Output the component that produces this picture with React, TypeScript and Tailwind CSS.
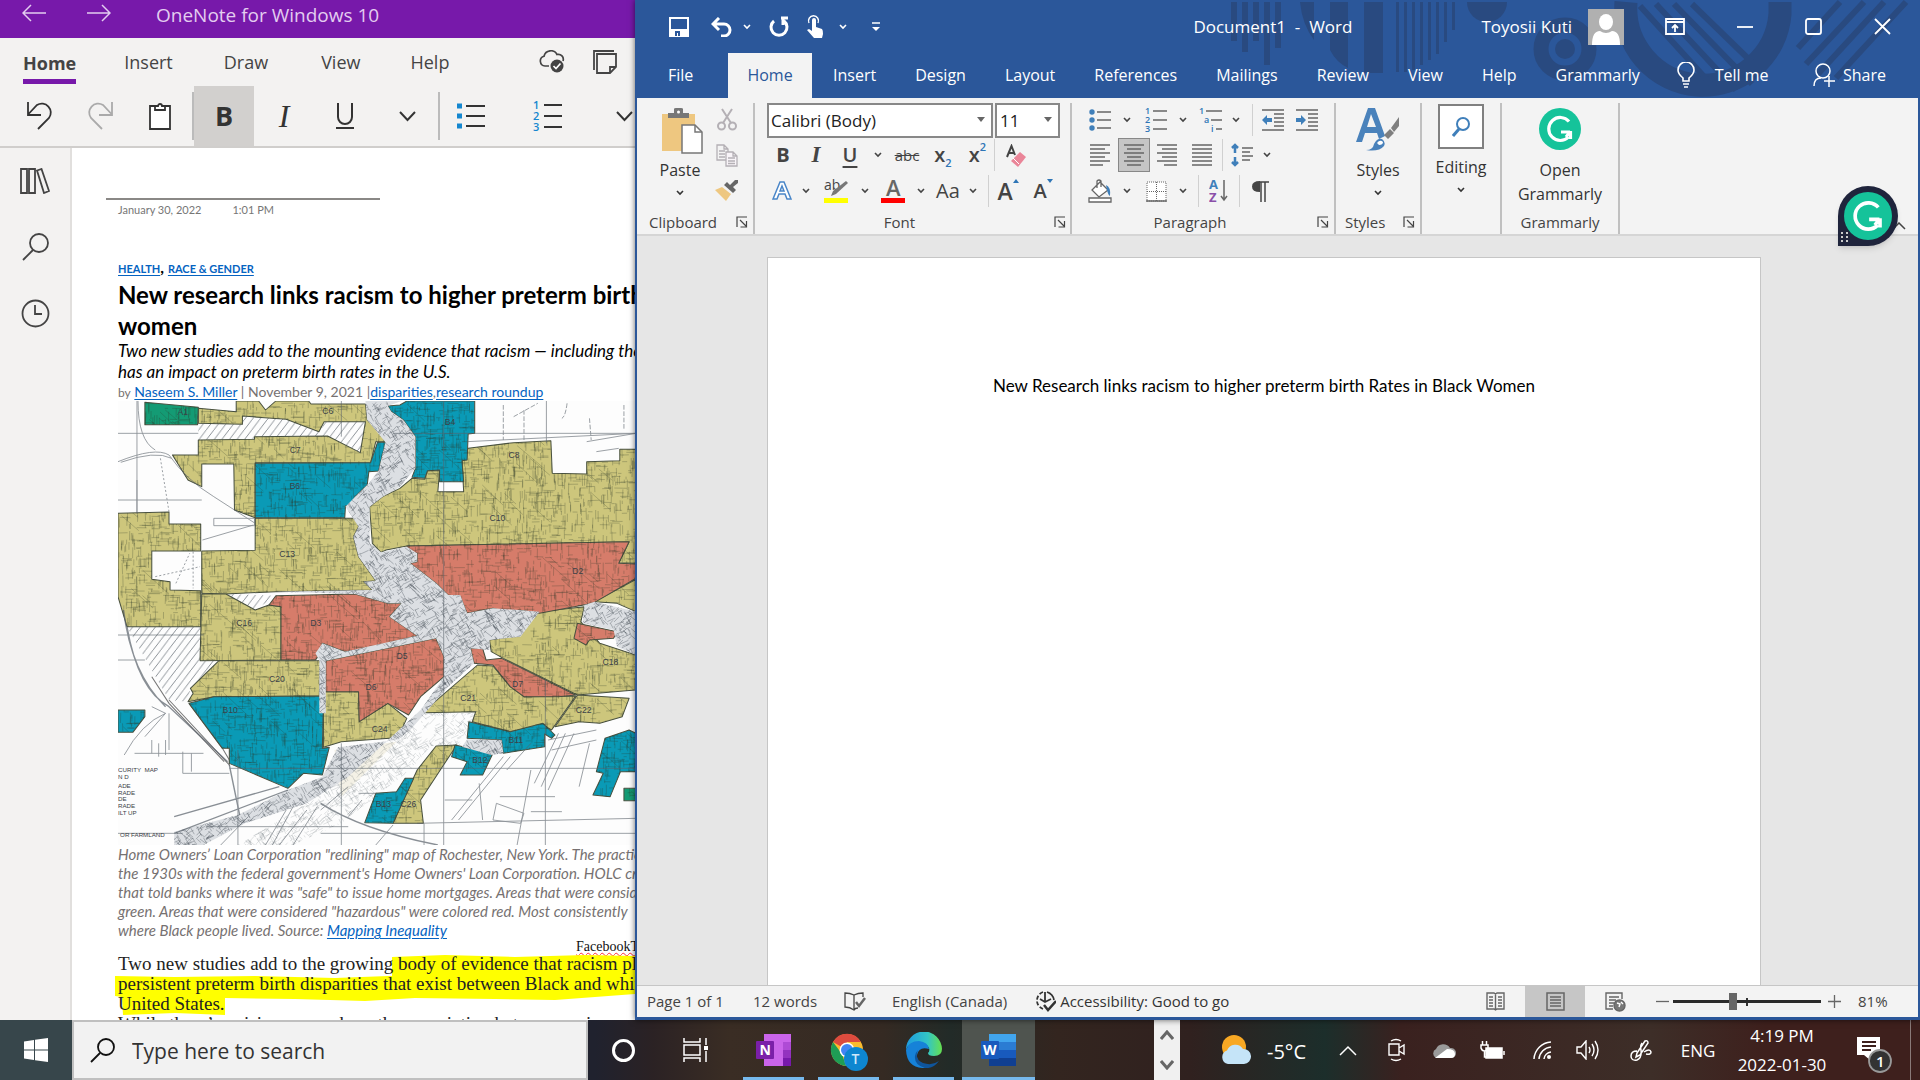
import React from "react";

type Box = { className?: string; children?: React.ReactNode };

function Svg({ w, h, sw = 2, className = "", children }: Box & { w: number; h: number; sw?: number }) {
  return (
    <svg width={w} height={h} viewBox={`0 0 ${w} ${h}`} fill="none" stroke="currentColor" strokeWidth={sw} className={"shrink-0 " + className} aria-hidden="true">
      {children}
    </svg>
  );
}

function Chevron({ className = "" }: { className?: string }) {
  return (
    <Svg w={8} h={6} sw={1.6} className={className}>
      <path d="M1 1l3 3 3-3" />
    </Svg>
  );
}

function Btn({ label, className = "", children }: Box & { label: string }) {
  return (
    <button type="button" aria-label={label} className={"flex shrink-0 items-center justify-center " + className}>
      {children}
    </button>
  );
}

/* ---------- OneNote ---------- */

function OneNoteHeader() {
  return (
    <header className="shrink-0">
      <div className="flex h-[38px] items-start bg-[#7719aa] text-[#e3cdf0]">
        <Btn label="Back" className="ml-5 mt-px h-6 w-7"><Svg w={24} h={18} sw={1.5}><path d="M9 1L1 9l8 8M1 9h23" /></Svg></Btn>
        <Btn label="Forward" className="ml-[37px] mt-px h-6 w-7"><Svg w={24} h={18} sw={1.5}><path d="M15 1l8 8-8 8M23 9H0" /></Svg></Btn>
        <span className="ml-[43px] text-[19px] leading-[30px]">OneNote for Windows 10</span>
      </div>
      <nav className="flex h-12 items-center text-lg text-[#444]">
        <button type="button" className="ml-[23px] flex h-full flex-col justify-end font-bold">
          <span className="leading-8">Home</span>
          <span className="mb-[2px] h-[5px] w-full bg-[#7719aa]" />
        </button>
        <button type="button" className="ml-12">Insert</button>
        <button type="button" className="ml-[51px]">Draw</button>
        <button type="button" className="ml-[53px]">View</button>
        <button type="button" className="ml-[50px]">Help</button>
        <Btn label="Sync status" className="ml-auto">
          <Svg w={26} h={24} sw={1.7}>
            <path d="M10 16H6a5 5 0 0 1-1-9.800A7 7 0 0 1 18 4.500 5 5 0 0 1 24 11" />
            <circle cx="18" cy="16" r="6.500" fill="#444" stroke="none" />
            <path d="M14.500 16l2.500 2.500 4.500-5" stroke="#fff" />
          </Svg>
        </Btn>
        <Btn label="Notebook" className="ml-7 mr-[18px]">
          <Svg w={24} h={24} sw={1.800}>
            <path d="M1 20V1h20M4 4h19v13l-6 6H4zM17 23v-6h6" />
          </Svg>
        </Btn>
      </nav>
      <div className="flex h-[60px] items-center text-[#333]">
        <Btn label="Undo" className="ml-6 w-8"><Svg w={26} h={30} sw={1.800}><path d="M1 1v13h13M1.500 13L10 4a9 9 0 0 1 12 13L11 28" /></Svg></Btn>
        <Btn label="Redo" className="ml-7 w-8 text-[#aaa]"><Svg w={26} h={30} sw={1.800}><path d="M25 1v13H12M24.500 13L16 4A9 9 0 0 0 4 17l11 11" /></Svg></Btn>
        <Btn label="Paste" className="ml-7 w-8"><Svg w={24} h={28} sw={1.800}><path d="M7 4H2v23h20V4h-5" fill="#fff" /><path d="M7 8V4h3a2 2 0 0 1 4 0h3v4z" /></Svg></Btn>
        <span className="ml-4 h-12 w-[2px] bg-[#bbb]" />
        <Btn label="Bold" className="h-full w-[60px] bg-[#d2d0ce] text-[27px] font-bold">B</Btn>
        <Btn label="Italic" className="w-[60px] font-['Liberation_Serif'] text-[32px] italic">I</Btn>
        <Btn label="Underline" className="w-[62px]"><Svg w={20} h={28} sw={2}><path d="M3 1v14a7 7 0 0 0 14 0V1M1 26h18" /></Svg></Btn>
        <Btn label="More text formatting" className="w-[62px]"><Svg w={17} h={11} sw={2}><path d="M1 1l7.500 8L16 1" /></Svg></Btn>
        <span className="h-12 w-[2px] bg-[#bbb]" />
        <Btn label="Bulleted list" className="w-[62px]">
          <Svg w={30} h={28} sw={1.800}><path d="M10 4h19M10 14h19M10 24h19" /><path d="M1 4h5M1 14h5M1 24h5" stroke="#1487cf" strokeWidth="5" /></Svg>
        </Btn>
        <Btn label="Numbered list" className="ml-[14px] w-[64px]">
          <Svg w={30} h={34} sw={1.800}>
            <path d="M11 6h18M11 17h18M11 28h18" />
            <g fill="#1487cf" stroke="none" fontSize="11" fontWeight="600"><text x="0" y="10">1</text><text x="0" y="21">2</text><text x="0" y="32">3</text></g>
          </Svg>
        </Btn>
        <Btn label="More list options" className="ml-auto mr-[2px]"><Svg w={17} h={11} sw={2}><path d="M1 1l7.500 8L16 1" /></Svg></Btn>
      </div>
    </header>
  );
}

function SideRail() {
  return (
    <aside className="flex w-[72px] shrink-0 flex-col items-center border-r-2 border-[#e1dfdd] bg-[#f3f2f1] pt-[18px] text-[#444]">
      <Btn label="Show notebooks" className="h-[30px]"><Svg w={30} h={26} sw={1.800}><path d="M1 1h6v24H1zM9 1h6v24H9zM17 2.500L21.500 1 29 23l-5 2z" /></Svg></Btn>
      <Btn label="Search" className="mt-9 h-[30px]"><Svg w={27} h={28} sw={1.800}><circle cx="17" cy="10" r="9" /><path d="M11 17L1 27" /></Svg></Btn>
      <Btn label="Recent notes" className="mt-9 h-[30px]"><Svg w={29} h={29} sw={1.800}><circle cx="14.500" cy="14.500" r="13" /><path d="M14 6v9h7" /></Svg></Btn>
    </aside>
  );
}

const yellowAreas = [
  "285,55 395,65 395,33 460,33 480,60 510,33 605,33 612,42 770,42 775,90 825,130 825,155 800,155 785,218 450,218 450,383 390,360 388,222 295,222 295,290 255,270 210,195 285,195 285,150 448,148 448,140 660,138 755,188 770,95 650,95 635,125 540,88 413,78 413,103 285,100",
  "52,370 200,366 200,402 292,402 292,483 150,483 150,568 203,575 203,600 292,602 292,710 78,710 52,620",
  "450,385 740,385 750,410 735,440 750,500 800,572 765,575 790,600 510,605 365,612 295,610 295,483 450,481",
  "295,612 365,612 450,660 490,645 525,650 525,810 290,812",
  "345,812 640,812 636,918 330,920 255,935 270,910 262,895",
  "655,905 750,905 752,995 835,940 890,985 870,1030 840,1045 700,1055 648,1072 648,905",
  "1068,175 1200,158 1308,152 1312,250 1412,252 1412,215 1508,212 1508,178 1555,178 1555,520 1505,518 1535,455 890,468 830,480 815,487 790,460 782,350 820,320 870,295 905,265 942,268 950,242 985,242 980,305 1055,305 1050,212",
  "1555,568 1555,665 1500,640 1435,635",
  "1130,750 1220,735 1250,690 1275,665 1405,650 1395,695 1450,760 1555,795 1555,900 1385,915 1170,805 1135,785",
  "1095,825 1140,828 1190,890 1230,920 1380,918 1310,1020 1285,1005 1190,1025 1080,995 1090,965 935,968",
  "1385,915 1535,925 1515,980 1450,1000 1390,995 1320,1010",
  "975,1068 1035,1065 1000,1120 930,1230 938,1300 850,1300 880,1230 920,1140",
];
const blueAreas = [
  "450,220 785,218 805,157 828,157 808,243 780,245 775,285 740,320 738,345 712,348 710,383 450,383",
  "835,48 870,45 890,33 1087,33 1087,130 1068,132 1065,210 1050,212 1055,275 985,275 985,240 950,242 942,265 905,262 915,235 915,140 880,90 845,65",
  "258,940 330,920 636,918 648,935 645,1075 665,1072 645,1155 590,1150 545,1195 375,1120 375,1075 355,1075",
  "52,960 130,960 130,980 95,1027 52,1027",
  "1070,995 1190,1025 1285,1000 1320,1035 1310,1045 1290,1032 1290,1070 1170,1090 1165,1050 1065,1045",
  "1030,1065 1140,1090 1110,1155 1045,1155 1065,1115 1020,1100",
  "800,1210 860,1205 885,1165 910,1165 850,1300 768,1298",
  "1465,1045 1535,1020 1555,1030 1555,1145 1510,1145 1480,1220 1430,1215 1460,1150 1440,1145",
];
const redAreas = [
  "890,468 1535,455 1505,520 1555,522 1555,565 1430,640 1275,670 1215,660 1185,668 1140,655 1065,670 1045,620 1010,615 975,580 900,520 920,515 920,490 890,490",
  "490,645 510,617 740,612 835,640 875,640 840,680 920,737 760,780 710,785 645,760 640,790 625,810 525,810 525,650",
  "655,812 975,745 998,800 998,860 930,920 895,975 835,940 752,995 750,905 655,905",
  "1385,700 1500,725 1490,745 1420,750 1410,765 1375,745",
  "1075,775 1110,775 1120,810 1165,805 1380,915 1330,920 1230,920 1190,890 1140,825 1085,820",
];
const greenAreas = ["130,37 285,52 283,104 130,104", "1520,1195 1555,1195 1555,1232 1520,1232"];
const cityAreas = [
  "770,33 875,33 835,48 845,65 880,90 915,140 915,235 870,290 820,320 782,350 782,460 815,487 890,470 920,490 920,515 900,520 975,580 1010,615 1045,615 1065,670 1140,655 1215,660 1275,665 1220,740 1130,750 1130,780 1075,775 1085,820 1010,890 900,1020 860,1050 690,1072 645,1160 545,1200 400,1275 215,1325 215,1365 300,1365 420,1300 600,1240 720,1160 930,960 998,860 998,800 975,745 655,812 655,970 636,970 636,812 625,790 645,760 710,785 920,737 840,680 875,640 835,640 740,612 510,605 790,600 765,575 800,572 750,500 735,440 750,410 712,350 740,320 775,285 808,243 828,157 775,90",
  "1065,1048 1165,1050 1170,1090 1135,1095 1050,1070",
  "1405,645 1435,635 1555,665 1555,795 1500,770 1490,720 1400,700",
];
const looseAreas = ["930,968 1090,968 1065,1050 1050,1070 960,1068 900,1140 700,1300 560,1365 400,1365 600,1240 720,1160"];

/* Deterministic street strokes so the map texture is stable between renders. */
function strokes(count: number, seed: number, len: number, angles: number[]) {
  let s = seed;
  const rnd = () => {
    s = (s * 16807) % 2147483647;
    return s / 2147483647;
  };
  let d = "";
  for (let i = 0; i < count; i++) {
    const x = 52 + rnd() * 1503;
    const y = 33 + rnd() * 1332;
    const l = len * (0.3 + rnd());
    const a = angles[Math.floor(rnd() * angles.length)] + (rnd() - 0.5) * 0.08;
    d += `M${Math.round(x)} ${Math.round(y)}l${(Math.cos(a) * l).toFixed(1)} ${(Math.sin(a) * l).toFixed(1)}`;
  }
  return d;
}
const blockStreets = strokes(9500, 77, 28, [0, 1.57, 0, 1.57, 1.57]);
const cityStreets = strokes(17000, 991, 22, [0.7, 2.3, 1.1, 2.7]);
const diagonals = strokes(260, 313, 80, [0.75]);

const labels: [string, number, number][] = [
  ["A1", 225, 75], ["C6", 645, 73], ["B4", 1000, 104], ["C7", 550, 188], ["B6", 550, 297], ["C8", 1185, 203], ["C13", 520, 500],
  ["C10", 1130, 392], ["D2", 1370, 553], ["D3", 610, 708], ["C16", 395, 708], ["C20", 490, 876], ["D5", 860, 808], ["D6", 770, 900],
  ["B10", 355, 968], ["C24", 788, 1026], ["C18", 1458, 826], ["C21", 1045, 932], ["C22", 1380, 968], ["D7", 1195, 892], ["B11", 1185, 1058], ["B12", 1080, 1118], ["B13", 800, 1252], ["C26", 872, 1252],
];

function RedliningMap() {
  const draw = (list: string[], fill: string) => list.map((p) => <polygon key={p} points={p} fill={fill} />);
  const colored = [...yellowAreas, ...blueAreas, ...redAreas, ...greenAreas];
  return (
    <svg viewBox="52 33 1503 1332" preserveAspectRatio="none" className="block h-[444px] w-[518px]" role="img" aria-label="Redlining map of Rochester, New York">
      <defs>
        <clipPath id="zones">{draw(colored, "#000")}</clipPath>
        <clipPath id="city">{draw(cityAreas, "#000")}</clipPath>
        <clipPath id="loose">{draw(looseAreas, "#000")}</clipPath>
        <pattern id="hatch" width="22" height="30" patternUnits="userSpaceOnUse"><path d="M0 30L22 0" stroke="#555d66" strokeWidth="2" /></pattern>
      </defs>
      <rect x="52" y="33" width="1503" height="1332" fill="#fdfdfd" />
      <g fill="url(#hatch)">
        <path d="M285 102L413 103V78L540 88 660 138 448 140V148L285 150z" />
        <path d="M650 95H770L755 188 640 128zM365 612L510 617 450 660zM78 710H290V812H345L262 895 255 935 200 930z" />
      </g>
      <path d="M200 930L375 1125 375 1110 355 1075 258 940M150 860L200 940 360 1115" fill="none" stroke="#777" strokeWidth="3" />
      <path d="M680 1080L860 1055 700 1220z" fill="#f4f1e6" />
      <g clipPath="url(#loose)" fill="none" stroke="#3e4650"><path d={cityStreets} strokeWidth="1.500" opacity="0.3" /></g>
      <g stroke="#4a5240" strokeWidth="3" strokeLinejoin="round">
        {draw(yellowAreas, "#cdc67c")}
        {draw(redAreas, "#d67c6a")}
        {draw(blueAreas, "#0a9ab6")}
        {draw(greenAreas, "#149b74")}
      </g>
      <g clipPath="url(#zones)" fill="none" stroke="#2f3a2c">
        <path d={blockStreets} strokeWidth="1.700" opacity="0.45" />
        <path d={diagonals} strokeWidth="2" opacity="0.35" />
      </g>
      {draw(cityAreas, "#dcdfe3")}
      <g clipPath="url(#city)" fill="none" stroke="#3e4650"><path d={cityStreets} strokeWidth="1.700" opacity="0.6" /></g>
      <g fill="none" stroke="#59616a" strokeWidth="2.500" opacity="0.7">
        <path d="M52 130H285M107 33V370M52 330H295M107 270V370M850 130H1555M700 33V140M1295 33V160M997 33V1365M1292 870V1365M700 1060V1365M52 735H300M1065 155L1555 130M1412 155L1555 130M1440 185L1505 175M52 1330H240M375 1135H1555M400 1080V1365M200 970V1080M52 810H130M640 1330H1555M920 1300L1555 1285M310 1310H720" />
        <path d="M52 215Q160 170 200 195 250 270 330 320L450 400M60 217Q160 180 208 205M330 385H448V407H330zM297 450L445 405M110 33Q110 150 160 180" />
        <path d="M78 710Q110 900 200 950L370 1115M68 660Q90 850 190 950M375 1125L405 1275M215 1330L545 1200M215 1280L520 1190M640 1240Q760 1320 980 1365" strokeWidth="4" />
        <path d="M175 205L200 365M270 485V595M160 560L290 530M220 580L260 490" strokeDasharray="6 6" />
        <path d="M1170 45V150M1230 60V150M1355 40Q1350 80 1340 85M1420 85L1425 150M1520 45V120M1200 80L1270 40" strokeDasharray="14 5" />
        <path d="M1250 1060L1180 1140M1330 1030L1260 1180M1350 1030L1280 1190M1375 1030L1300 1200M1420 1060L1390 1190M1300 1050L1440 1020M1310 1080L1440 1050M1170 1100L1020 1290M1190 1100L1040 1290M1250 1140L1210 1365M1000 1230H1080M1100 1180L1110 1290M1150 1240L1230 1270 1220 1300 1140 1290zM1160 1220H1320M1250 1265H1340M760 1230L720 1280M750 1210H800M720 1190L640 1260M850 1305L800 1365M940 1300V1365" />
        <path d="M430 1280L350 1365M540 1260L480 1365M560 1250L500 1365M600 1260L520 1365M630 1250L560 1365" />
        <path d="M100 1090H300M150 1050V1090M170 1060V1100M190 1050V1095M240 1085V1150H375M265 1090V1145M130 1040L190 970 150 950M70 1095Q120 1000 190 970" />
      </g>
      <g fill="#3c4248" stroke="none">
        {labels.map(([t, x, y]) => <text key={t} x={x} y={y} fontSize="25" fontFamily="Liberation Sans">{t}</text>)}
        <g fontSize="18" fontFamily="Liberation Sans">
          <text x="52" y="1145">CURITY&#160; MAP</text><text x="52" y="1168">N D</text><text x="52" y="1194">ADE</text><text x="52" y="1214">RADE</text>
          <text x="52" y="1234">DE</text><text x="52" y="1254">RADE</text><text x="52" y="1274">ILT UP</text><text x="58" y="1341">OR FARMLAND</text>
        </g>
      </g>
    </svg>
  );
}

function Link({ children }: Box) {
  return <a href="#" className="text-[#0563c1] underline underline-offset-2">{children}</a>;
}

function OneNotePage() {
  return (
    <article className="min-w-0 flex-1 overflow-hidden whitespace-nowrap bg-white pl-[46px] font-['Lato','Open_Sans',sans-serif] text-black">
      <div className="-ml-3 mt-[50px] w-[274px] border-t-2 border-[#8a8886]" />
      <div className="flex gap-[31px] pt-[2px] text-[11px] leading-4 text-[#767676]"><span>January 30, 2022</span><span>1:01 PM</span></div>
      <p className="mt-[39px] text-[11px] font-bold leading-5"><Link>HEALTH</Link><span className="text-base leading-5">, </span><Link>RACE &amp; GENDER</Link></p>
      <h1 className="text-2xl font-bold leading-[31px]">New research links racism to higher preterm birth rates among Black<br />women</h1>
      <p className="-mt-px text-[17px] italic leading-[21px]">Two new studies add to the mounting evidence that racism — including the<br />has an impact on preterm birth rates in the U.S.</p>
      <p className="text-sm leading-[19px] text-[#767171]"><span className="text-xs">by</span> <Link>Naseem S. Miller</Link> | November 9, 2021 |<Link>disparities</Link>,<Link>research roundup</Link></p>
      <RedliningMap />
      <p className="text-[15px] italic leading-[19px] text-[#767171]">
        Home Owners’ Loan Corporation "redlining" map of Rochester, New York. The practice<br />
        the 1930s with the federal government's Home Owners' Loan Corporation. HOLC created<br />
        that told banks where it was "safe" to issue home mortgages. Areas that were considered<br />
        green. Areas that were considered "hazardous" were colored red. Most consistently<br />
        where Black people lived. Source: <Link>Mapping Inequality</Link>
      </p>
      <p className="ml-[458px] font-['Liberation_Serif',serif] text-sm leading-[14px] text-[#111]"><span className="underline decoration-red-500 decoration-wavy decoration-1">FacebookTwitter</span></p>
      <div className="relative font-['Liberation_Serif',serif] text-[19px] leading-5 text-[#222]">
        <svg viewBox="0 0 520 66" className="absolute -left-[3px] top-0 h-[66px] w-[520px]" fill="#ffff00" aria-hidden="true">
          <path d="M277 3L330 1 400 3 470 1 520 2V24H277zM0 22L60 23 140 22 220 24 300 21 520 20V40L480 43 440 46 380 45 300 44 250 47 180 45 110 44V61L60 59 8 61 7 43 0 42z" />
        </svg>
        <p className="relative">
          Two new studies add to the growing body of evidence that racism plays a role in<br />
          persistent preterm birth disparities that exist between Black and white women in the<br />
          United States.<br />
          While there’s a rising research on the association between racism and health
        </p>
      </div>
    </article>
  );
}

/* ---------- Word ---------- */

function TitleArt() {
  const thin = [70, 70, 68, 63, 58, 52, 40, 28];
  return (
    <svg viewBox="0 0 690 98" className="absolute right-0 top-0 h-[98px] w-[690px]" aria-hidden="true">
      <g fill="#294a80">
        <path d="M3 2h6v39H3zM14 2h6v50h-6zM25 2h6v39h-6zM36 2h6v63h-6zM47 2h6v46h-6zM72 2h14v38Q74 24 72 2zM102 2h18v66Q108 62 102 50zM136 2h19v71h-19z" />
        {thin.map((h, i) => <rect key={i} x={168 + i * 8} y="2" width="3" height={h} />)}
        <path d="M239 2h40a20 20 0 1 1-40 0z" />
      </g>
      <g fill="none" stroke="#294a80">
        <circle cx="337" cy="49" r="24" strokeWidth="15" /><circle cx="337" cy="49" r="10" fill="#294a80" stroke="none" />
        <path d="M398 2a77 77 0 0 0 154 12V2" strokeWidth="23" />
        <path d="M412 6L490 92M428 4L508 90M446 4L524 84M464 4L536 74" strokeWidth="6" />
        <path d="M570 48L612 2M578 64L636 2M590 74L656 2M608 78L678 2" strokeWidth="6" />
      </g>
    </svg>
  );
}

const wordTabs = ["Insert", "Design", "Layout", "References", "Mailings", "Review", "View", "Help", "Grammarly"];

function WordHeader() {
  return (
    <header className="relative h-[98px] shrink-0 overflow-hidden bg-[#2b579a] text-white">
      <TitleArt />
      <div className="relative flex h-[53px] items-center">
        <Btn label="Save" className="ml-8"><Svg w={20} h={20} sw={2}><path d="M1 1h18v18H1z" /><path d="M1 12h18v7H1z" fill="#fff" stroke="none" /><path d="M7 19v-4h3v4" stroke="#2b579a" /></Svg></Btn>
        <Btn label="Undo" className="ml-[22px]"><Svg w={23} h={20} sw={3}><path d="M8 1L2 7l6 6M2 7h11a6 6 0 0 1 0 12h-3" /></Svg></Btn>
        <Btn label="Undo options" className="ml-[9px]"><Chevron /></Btn>
        <Btn label="Repeat" className="ml-[17px]"><Svg w={22} h={22} sw={3}><path d="M6 5a8 8 0 1 0 10 0M13 2h7M15 1v8" /></Svg></Btn>
        <Btn label="Touch mode" className="ml-[16px]">
          <Svg w={18} h={24} sw={1.500}><path d="M3 8a5 5 0 1 1 9 0" /><path d="M6 5a2 2 0 0 1 4 0v7l6 2q1 1 1 5l-1 4H8L1 15l2-1 3 2z" fill="#fff" stroke="none" /></Svg>
        </Btn>
        <Btn label="Touch options" className="ml-[15px]"><Chevron /></Btn>
        <Btn label="Customize Quick Access Toolbar" className="ml-6"><Svg w={10} h={10} sw={1.500}><path d="M1 1h8" /><path d="M1 5h8l-4 4z" fill="#fff" stroke="none" /></Svg></Btn>
        <span className="ml-auto w-[166px] whitespace-pre text-[17px]">Document1  -  Word</span>
        <button type="button" className="ml-[122px] flex items-center gap-4 text-[17px]">
          Toyosii Kuti
          <svg width="36" height="36" viewBox="0 0 36 36" aria-hidden="true"><path fill="#b0b0b0" d="M0 0h36v36H0z" /><ellipse cx="18" cy="13" rx="7" ry="8" fill="#fff" /><path fill="#fff" d="M4 36q0-14 8-14 6 4 12 0 8 0 8 14z" /></svg>
        </button>
        <Btn label="Ribbon display options" className="ml-[41px]"><Svg w={20} h={17} sw={1.800}><path d="M1 1h18v15H1zM1 4h18M10 14V7M7 10l3-3 3 3" /></Svg></Btn>
        <Btn label="Minimize" className="ml-[52px]"><Svg w={16} h={16} sw={1.800}><path d="M0 8h16" /></Svg></Btn>
        <Btn label="Maximize" className="ml-[52px]"><Svg w={17} h={17} sw={1.800}><rect x="1" y="1" width="15" height="15" rx="2" /></Svg></Btn>
        <Btn label="Close" className="ml-[52px] mr-[27px]"><Svg w={17} h={17} sw={1.800}><path d="M1 1l15 15M16 1L1 16" /></Svg></Btn>
      </div>
      <nav className="relative flex h-[45px] items-center gap-[3px] pb-[2px] text-base">
        <button type="button" className="w-[88px] pl-[31px] text-left">File</button>
        <button type="button" className="-mb-[2px] h-[45px] w-[84px] shrink-0 bg-[#f3f3f3] pb-[2px] text-[#2b579a]">Home</button>
        {wordTabs.map((t) => <button type="button" key={t} className="px-[18px]">{t}</button>)}
        <button type="button" className="ml-4 flex items-center gap-5 whitespace-nowrap">
          <Svg w={18} h={26} sw={1.600}><path d="M6 19v-3Q1 12 1 8a8 8 0 0 1 16 0q0 4-5 8v3zM6 22h6M7 25h4" /></Svg>Tell me
        </button>
        <button type="button" className="ml-auto mr-8 flex items-center gap-2">
          <Svg w={22} h={24} sw={1.500}><circle cx="10" cy="8" r="7" /><path d="M1 23q0-8 7-8M16 13v11M11 18h11" /></Svg>Share
        </button>
      </nav>
    </header>
  );
}

function Launcher({ label, className = "" }: { label: string; className?: string }) {
  return <Btn label={label} className={className}><Svg w={12} h={12} sw={1.200} className="text-[#444]"><path d="M1 11V1h10M4 4l6 6M10.500 5v6h-6" /></Svg></Btn>;
}

function Sep() {
  return <span className="h-8 w-px shrink-0 bg-[#d0d0d0]" />;
}

function Lines({ rows }: { rows: [number, number][] }) {
  return <Svg w={20} h={22} sw={1.500} className="text-[#666]"><path d={rows.map(([a, b], i) => `M${a} ${1 + i * 4}H${b}`).join("")} /></Svg>;
}

function GLogo({ size }: { size: number }) {
  return (
    <svg width={size} height={size} viewBox="0 0 42 42" aria-hidden="true">
      <circle cx="21" cy="21" r="21" fill="#15c39a" />
      <path d="M30 13.500A11.500 11.500 0 1 0 29.500 29M31 24H22M31.500 23v8M31 24l-4 5" fill="none" stroke="#fff" strokeWidth="3.200" />
    </svg>
  );
}

function Ribbon() {
  return (
    <section aria-label="Ribbon" className="relative flex h-[138px] shrink-0 border-b-2 border-[#d5d5d5] bg-[#f3f3f3] pt-[5px] text-[#444]">
      <div className="flex w-[118px] flex-col border-r-2 border-[#c0c0c0]">
        <div className="flex h-[107px] shrink-0">
          <button type="button" className="ml-3 flex w-[62px] flex-col items-center justify-start pt-[5px] text-base text-[#333]">
            <Svg w={42} h={46} sw={1.500} className="ml-1">
              <path d="M1 6h33v37H1z" fill="#eec780" stroke="none" />
              <path d="M7 10V5h6V1q0-1 2-1h5q2 0 2 1v4h6v5z" fill="#777" stroke="none" /><circle cx="17.500" cy="4" r="1.500" fill="#fff" stroke="none" />
              <path d="M21 17h13l7 7v21H21z" fill="#fff" stroke="#777" /><path d="M34 17v7h7" stroke="#777" />
            </Svg>
            <span className="mt-[2px] leading-7">Paste</span>
            <Chevron className="mt-[6px]" />
          </button>
          <div className="ml-1 flex flex-col items-center gap-[13px] pt-[5px]">
            <Btn label="Cut"><Svg w={20} h={23} sw={2} className="text-[#b4b0b5]"><path d="M5 1l9 14M15 1L6 15" /><circle cx="4.500" cy="18" r="3.500" /><circle cx="15.500" cy="18" r="3.500" /></Svg></Btn>
            <Btn label="Copy"><Svg w={22} h={23} sw={1.300} className="text-[#b4b0b5]"><path d="M1 1h7l4 4v11H1zM8 1v4h4M3 7h6M3 10h6M3 13h6" /><path d="M10 8h7l4 4v10H10zM17 8v4h4M12 14h7M12 17h7M12 19.500h7" fill="#f8f4f8" /></Svg></Btn>
            <Btn label="Format painter"><Svg w={24} h={21} sw={0}><path d="M0 10l7-3 9 7-5 7z" fill="#eec780" /><path d="M9 5l9 8 3-3-3-3 5-4V0h-3l-5 5-3-3z" fill="#666" /></Svg></Btn>
          </div>
        </div>
        <div className="flex items-center justify-between pl-3 pr-[5px] text-[15px] leading-6">Clipboard<Launcher label="Clipboard settings" /></div>
      </div>

      <div className="flex w-[317px] flex-col border-r-2 border-[#c0c0c0] pl-3 pr-[10px]">
        <div className="flex h-[35px] shrink-0 gap-[2px]">
          <label className="relative flex-1">
            <span className="sr-only">Font</span>
            <select className="h-[35px] w-full appearance-none border-2 border-[#888] bg-white px-[2px] text-[17px] text-[#222]"><option>Calibri (Body)</option></select>
            <span className="pointer-events-none absolute right-2 top-[14px] border-x-4 border-t-[5px] border-x-transparent border-t-[#666]" />
          </label>
          <label className="relative w-[65px]">
            <span className="sr-only">Font size</span>
            <select className="h-[35px] w-full appearance-none border-2 border-[#888] bg-white px-[3px] text-[17px] text-[#222]"><option>11</option></select>
            <span className="pointer-events-none absolute right-2 top-[14px] border-x-4 border-t-[5px] border-x-transparent border-t-[#666]" />
          </label>
        </div>
        <div className="flex h-[34px] shrink-0 items-center">
          <Btn label="Bold" className="w-8 text-xl font-bold">B</Btn>
          <Btn label="Italic" className="w-[34px] font-['Liberation_Serif'] text-[23px] font-bold italic">I</Btn>
          <Btn label="Underline" className="w-[34px] text-xl font-semibold underline underline-offset-4">U</Btn>
          <Btn label="Underline options" className="w-[22px]"><Chevron /></Btn>
          <Btn label="Strikethrough" className="w-9 text-[15px] line-through">abc</Btn>
          <Btn label="Subscript" className="w-9 text-xl leading-7 font-semibold">x<span className="self-end text-[11px] leading-3 text-[#2e75b6]">2</span></Btn>
          <Btn label="Superscript" className="w-[33px] text-xl leading-7 font-semibold">x<span className="self-start text-[11px] leading-3 text-[#2e75b6]">2</span></Btn>
          <Sep />
          <Btn label="Clear formatting" className="w-11"><Svg w={22} h={23} sw={2}><path d="M1 13L5.500 2 9 11M3 9h5" /><path d="M5 17l7 6 8-10-6-5z" fill="#ea8598" stroke="none" /><path d="M7 14l6 6" stroke="#fff" strokeWidth="1" /></Svg></Btn>
        </div>
        <div className="flex h-[38px] shrink-0 items-center">
          <Btn label="Text effects" className="w-[30px]">
            <Svg w={20} h={20} sw={1.500}><path d="M1 18L8 1h4l7 17h-4l-2-5H7l-2 5zM8 10h4l-2-5z" fill="#fff" stroke="#4a86c8" /></Svg>
          </Btn>
          <Btn label="Text effects options" className="w-[18px]"><Chevron /></Btn>
          <Btn label="Highlight color" className="w-11">
            <Svg w={26} h={24} sw={0}><path d="M0 19h24v5H0z" fill="#ff0" /><text x="0" y="11" fontSize="14" fill="#444">ab</text><path d="M22 2l2 2L12 15l-5 2 2-5z" fill="#777" /></Svg>
          </Btn>
          <Btn label="Highlight options" className="w-3"><Chevron /></Btn>
          <Btn label="Font color" className="w-[44px]">
            <Svg w={24} h={24} sw={0}><path d="M0 19h24v5H0z" fill="#f00" /><text x="5" y="17" fontSize="22" fontWeight="600" fill="#666">A</text></Svg>
          </Btn>
          <Btn label="Font color options" className="w-3"><Chevron /></Btn>
          <Btn label="Change case" className="w-[42px] text-xl">Aa</Btn>
          <Btn label="Change case options" className="w-2"><Chevron /></Btn>
          <span className="w-[11px]" />
          <Sep />
          <Btn label="Grow font" className="w-[38px] text-[23px] leading-8 font-semibold">A<span className="mt-1 self-start border-x-[3px] border-b-4 border-x-transparent border-b-[#2e75b6]" /></Btn>
          <Btn label="Shrink font" className="w-[32px] text-xl leading-8 font-semibold">A<span className="mt-1 self-start border-x-[3px] border-t-4 border-x-transparent border-t-[#2e75b6]" /></Btn>
        </div>
        <div className="relative text-center text-[15px] leading-6"><span className="mr-7">Font</span><Launcher label="Font settings" className="absolute -right-[6px] top-[6px]" /></div>
      </div>

      <div className="flex w-[264px] flex-col border-r-2 border-[#c0c0c0] pl-[10px] pr-1">
        <div className="flex h-[34px] shrink-0 items-center">
          <Btn label="Bullets" className="w-9"><Svg w={22} h={22} sw={1.500} className="text-[#666]"><path d="M8 3h14M8 11h14M8 19h14" /><g fill="#3f7fba" stroke="none"><circle cx="3" cy="3" r="2.700" /><circle cx="3" cy="11" r="2.700" /><circle cx="3" cy="19" r="2.700" /></g></Svg></Btn>
          <Btn label="Bullet options" className="w-[18px]"><Chevron /></Btn>
          <Btn label="Numbering" className="w-10"><Svg w={22} h={26} sw={1.500} className="text-[#666]"><path d="M8 4h14M8 13h14M8 22h14" /><g fill="#2e75b6" stroke="none" fontSize="9" fontWeight="600"><text x="0" y="7">1</text><text x="0" y="16">2</text><text x="0" y="25">3</text></g></Svg></Btn>
          <Btn label="Numbering options" className="w-[14px]"><Chevron /></Btn>
          <Btn label="Multilevel list" className="w-[42px]"><Svg w={24} h={26} sw={1.500} className="text-[#666]"><path d="M7 4h16M12 13h11M17 22h6" /><g fill="#2e75b6" stroke="none" fontSize="9" fontWeight="600"><text x="0" y="7">1</text><text x="5" y="16">a</text><text x="12" y="25">i</text></g></Svg></Btn>
          <Btn label="Multilevel options" className="w-2"><Chevron /></Btn>
          <span className="w-3" />
          <Sep />
          <Btn label="Decrease indent" className="ml-[2px] w-9"><Svg w={22} h={22} sw={1.500} className="text-[#666]"><path d="M0 1h22M12 5h10M12 9h10M12 13h10M12 17h10M0 21h22" /><path d="M0 11l5-5v3h5v4H5v3z" fill="#3f7fba" stroke="none" /></Svg></Btn>
          <Btn label="Increase indent" className="w-8"><Svg w={22} h={22} sw={1.500} className="text-[#666]"><path d="M0 1h22M12 5h10M12 9h10M12 13h10M12 17h10M0 21h22" /><path d="M10 11L5 6v3H0v4h5v3z" fill="#3f7fba" stroke="none" /></Svg></Btn>
        </div>
        <div className="mt-px flex h-[34px] shrink-0 items-center">
          <Btn label="Align left" className="w-9"><Lines rows={[[0, 20], [0, 15], [0, 20], [0, 15], [0, 20], [0, 13]]} /></Btn>
          <Btn label="Center" className="h-[34px] w-8 border border-[#888] bg-[#c5c5c5]"><Lines rows={[[0, 20], [3, 17], [0, 20], [3, 17], [0, 20], [3, 17]]} /></Btn>
          <Btn label="Align right" className="w-[34px]"><Lines rows={[[0, 20], [5, 20], [0, 20], [5, 20], [0, 20], [7, 20]]} /></Btn>
          <Btn label="Justify" className="w-9"><Lines rows={[[0, 20], [0, 20], [0, 20], [0, 20], [0, 20], [0, 20]]} /></Btn>
          <span className="w-[2px]" />
          <Sep />
          <Btn label="Line spacing" className="w-[38px]"><Svg w={22} h={24} sw={1.500} className="text-[#666]"><path d="M11 5h11M11 9h8M11 13h11M11 17h8" /><path d="M4 3v7M4 14v7M1 5l3-3 3 3M1 19l3 3 3-3" stroke="#3f7fba" strokeWidth="2.500" /></Svg></Btn>
          <Btn label="Line spacing options" className="w-3"><Chevron /></Btn>
        </div>
        <div className="flex h-[38px] shrink-0 items-center">
          <Btn label="Shading" className="w-9"><Svg w={24} h={24} sw={1.300} className="text-[#666]"><path d="M1 19h22v4H1z" fill="#fff" /><path d="M12 3l8 8-9 7-7-7zM9 9V2q2-2 4 0v6" fill="#fff" /><path d="M18 6q5 2 4 11-2-1-3-6" fill="#3f7fba" stroke="none" /></Svg></Btn>
          <Btn label="Shading options" className="w-[18px]"><Chevron /></Btn>
          <Btn label="Borders" className="w-10"><Svg w={21} h={21} sw={1} className="text-[#666]"><path d="M1 1h19v19H1zM10.500 1v19M1 10.500h19" fill="#fff" strokeDasharray="1 1" /><path d="M0 20h21" strokeWidth="1.500" /></Svg></Btn>
          <Btn label="Border options" className="w-[14px]"><Chevron /></Btn>
          <span className="w-2" />
          <Sep />
          <Btn label="Sort" className="w-10"><Svg w={20} h={28} sw={1.500} className="text-[#666]"><g stroke="none" fontSize="13" fontWeight="700"><text x="0" y="12" fill="#3f7fba">A</text><text x="0" y="25" fill="#8a4fa8">Z</text></g><path d="M15 3v20M12 19l3 4 3-4" /></Svg></Btn>
          <Sep />
          <Btn label="Show paragraph marks" className="w-10"><Svg w={18} h={21} sw={1.500}><path d="M8 1h10M10 1v20M14 1v20" /><path d="M9 0v11q-8 0-8-5.500T9 0z" fill="#444" stroke="none" /></Svg></Btn>
        </div>
        <div className="relative text-center text-[15px] leading-6"><span className="mr-8">Paragraph</span><Launcher label="Paragraph settings" className="absolute right-px top-[6px]" /></div>
      </div>

      <div className="flex w-[86px] flex-col border-r-2 border-[#c0c0c0]">
        <button type="button" className="flex h-[107px] shrink-0 flex-col items-center justify-start pt-[5px] text-base text-[#333]">
          <Svg w={44} h={43} sw={0}><path d="M0 34L12 0h7l10 28-6 3-2-6H9l-3 9zM11 19h9L15 6z" fill="#4a82bb" /><path d="M10 42q7 0 8-6 3-6 8-5 4 3 2 7-5 6-18 4z" fill="#4a82bb" /><path d="M21 35q3-4 6-1 0 3-4 3z" fill="#fff" /><path d="M28 27l6-6 4 4-6 6zM35 20l8-11v9l-5 6z" fill="#7f7f7f" /></Svg>
          <span className="mt-[5px] leading-7">Styles</span><Chevron className="mt-[6px]" />
        </button>
        <div className="flex items-center justify-between pl-[9px] pr-[5px] text-[15px] leading-6">Styles<Launcher label="Styles settings" /></div>
      </div>

      <div className="w-20 border-r-2 border-[#c0c0c0]">
        <button type="button" className="flex w-full flex-col items-center text-base text-[#333]">
          <span className="mt-px flex h-[45px] w-[46px] items-center justify-center border-2 border-[#808080] bg-white text-[#3f7fba]"><Svg w={18} h={20} sw={2}><circle cx="11" cy="7" r="6" /><path d="M7 12l-6 7" strokeWidth="3" /></Svg></span>
          <span className="mt-1 leading-7">Editing</span><Chevron className="mt-[6px]" />
        </button>
      </div>

      <div className="flex w-[118px] flex-col items-center border-r-2 border-[#c0c0c0]">
        <button type="button" className="flex h-[107px] shrink-0 flex-col items-center justify-start pt-[5px] text-base leading-6 text-[#333]"><GLogo size={42} /><span className="mt-2 leading-6">Open</span><span>Grammarly</span></button>
        <span className="text-[15px] leading-6">Grammarly</span>
      </div>

      <Btn label="Collapse the Ribbon" className="absolute bottom-1 right-3"><Svg w={14} h={8} sw={1.500}><path d="M1 7l6-6 6 6" /></Svg></Btn>
      <Btn label="Grammarly assistant" className="absolute -bottom-3 right-5 z-10 h-[60px] w-[60px] rounded-full rounded-bl-md bg-[#1f243c] shadow-md">
        <GLogo size={48} />
        <Svg w={7} h={10} sw={2} className="absolute bottom-1 left-[3px] text-[#ccc]"><path d="M0 1h2M5 1h2M0 5h2M5 5h2M0 9h2M5 9h2" /></Svg>
      </Btn>
    </section>
  );
}

function StatusBar() {
  return (
    <footer className="flex h-8 shrink-0 items-center border-t border-[#c6c6c6] bg-[#f3f3f3] text-[15px] text-[#444]">
      <span className="ml-[10px] w-[106px]">Page 1 of 1</span>
      <span className="w-[91px]">12 words</span>
      <Btn label="Proofing"><Svg w={22} h={19} sw={1.300}><path d="M10 17V3Q6 1 1 1v14q5 0 9 3 1-2 4-2M10 3q4-2 9-2v4" /><path d="M12 10l3 4 6-8" strokeWidth="2.500" stroke="#666" /></Svg></Btn>
      <button type="button" className="ml-[26px]">English (Canada)</button>
      <button type="button" className="ml-7 flex items-center gap-1 text-[#333]">
        <Svg w={21} h={21} sw={1.800}><path d="M8 1a9 9 0 0 0 0 17" strokeDasharray="4 2" /><path d="M12 1q6 2 7 8M10 1v10M5 8l5 3 6-3" /><path d="M9 14l4 5 8-9" strokeWidth="2.500" /></Svg>
        Accessibility: Good to go
      </button>
      <div className="ml-auto flex h-full items-center text-[#666]">
        <Btn label="Read mode" className="h-full w-[60px]"><Svg w={19} h={19} sw={1.400}><path d="M1 1h7l1.500 1L11 1h7v16h-7l-1.500 1L8 17H1zM9.500 2v16M3 5h4M3 8h4M3 11h4M3 14h4M12 5h4M12 8h4M12 11h4M12 14h4" /></Svg></Btn>
        <Btn label="Print layout" className="h-full w-[60px] bg-[#c6c6c6]"><Svg w={19} h={19} sw={1.500}><path d="M1 1h17v17H1zM4 5h11M4 8h11M4 11h11M4 14h11" /></Svg></Btn>
        <Btn label="Web layout" className="h-full w-[60px]"><Svg w={21} h={20} sw={1.400}><path d="M8 17H1V1h16v6M4 5h10M4 8h7M4 11h5M4 14h4" /><circle cx="14.500" cy="13.500" r="5.500" fill="#777" /><path d="M12 11l3 1-1 3M16 10l2 2" stroke="#fff" /></Svg></Btn>
        <Btn label="Zoom out" className="ml-[6px] w-[22px]"><Svg w={13} h={13} sw={1.300}><path d="M0 6.500h13" /></Svg></Btn>
        <label className="relative flex w-[148px] items-center">
          <span className="sr-only">Zoom level</span>
          <span className="absolute left-[73px] h-2 w-[2px] bg-[#333]" />
          <input type="range" min="10" max="186" defaultValue="81" className="relative h-[3px] w-full appearance-none bg-[#2b2b2b] [&::-webkit-slider-thumb]:h-[17px] [&::-webkit-slider-thumb]:w-2 [&::-webkit-slider-thumb]:appearance-none [&::-webkit-slider-thumb]:bg-[#666]" />
        </label>
        <Btn label="Zoom in" className="w-[27px]"><Svg w={13} h={13} sw={1.300}><path d="M0 6.500h13M6.500 0v13" /></Svg></Btn>
        <span className="ml-[10px] w-[60px] text-[#444]">81%</span>
      </div>
    </footer>
  );
}

/* ---------- Taskbar ---------- */

function Taskbar() {
  return (
    <footer className="flex h-[60px] shrink-0 bg-[linear-gradient(90deg,#20222e_31%,#2b2224_34%,#3a2d24_38%,#352a23_46%,#222b28_49.500%,#33251f_55%,#30211f_62%,#1c2e2b_69%,#3a211f_73%,#3d2e28_86%,#3e201d_92%,#3e201d_100%)] text-white">
      <Btn label="Start" className="w-[72px] bg-[#37464b]"><Svg w={24} h={24} sw={0}><path d="M0 3.500l10-1.500v9.500H0zM11 1.800L24 0v11.500H11zM0 12.500h10V22L0 20.500zM11 12.500h13V24l-13-1.800z" fill="#fff" /></Svg></Btn>
      <label className="flex w-[516px] items-center gap-[17px] border-2 border-[#c0c0c0] bg-[#f2f2f2] pl-4 text-[#111]">
        <Svg w={25} h={25} sw={1.800}><circle cx="16" cy="9" r="8" /><path d="M10 15L1 24" /></Svg>
        <span className="sr-only">Search</span>
        <input placeholder="Type here to search" className="min-w-0 flex-1 bg-transparent pt-1 text-[21px] outline-none placeholder:text-[#333]" />
      </label>
      <Btn label="Cortana" className="w-[70px]"><span className="h-[23px] w-[23px] rounded-full border-[3px] border-white" /></Btn>
      <Btn label="Task view" className="w-[76px]"><Svg w={26} h={24} sw={1.500}><path d="M1 0v4h16V0M1 24v-4h16v4M1 7h16v10H1zM23 0v7M23 13v11" /><path d="M21 10h4" strokeWidth="4" /></Svg></Btn>
      <Btn label="OneNote" className="ml-[9px] w-[61px] border-b-[3px] border-[#76b9ed]">
        <Svg w={35} h={32} sw={0} className="mt-[3px]"><path d="M8 0h27v32H8z" fill="#ca64ea" /><path d="M27 8h8v8h-8z" fill="#ae4bd5" /><path d="M27 16h8v8h-8z" fill="#9332bf" /><path d="M27 24h8v8h-8z" fill="#7719aa" /><rect y="7" width="18" height="18" rx="1" fill="#7b1fa9" /><text x="3.500" y="21" fontSize="14" fontWeight="700" fill="#fff">N</text></Svg>
      </Btn>
      <Btn label="Chrome" className="ml-[14px] w-[61px] border-b-[3px] border-[#76b9ed]">
        <Svg w={38} h={38} sw={0} className="mt-[6px]"><circle cx="17" cy="17" r="16" fill="#fbbc2e" /><path d="M17 17L3 9A16 16 0 0 1 31 9H17z" fill="#dd4b3e" /><path d="M3 9l9 12 4 12A16 16 0 0 1 3 9z" fill="#1f9d55" /><circle cx="17" cy="17" r="7.500" fill="#fff" /><circle cx="17" cy="17" r="6" fill="#4285f4" /><circle cx="26" cy="26" r="12" fill="#0e86d0" /><text x="21.500" y="31" fontSize="14" fontWeight="600" fill="#cfe8fa">T</text></Svg>
      </Btn>
      <Btn label="Edge" className="ml-[14px] w-[61px] border-b-[3px] border-[#76b9ed]">
        <Svg w={36} h={36} sw={0} className="mt-[3px]">
          <defs><linearGradient id="edgeTop"><stop offset="0" stopColor="#1d9be0" /><stop offset=".6" stopColor="#33c5c5" /><stop offset="1" stopColor="#66e04f" /></linearGradient></defs>
          <path d="M0 18A18 18 0 0 1 36 17q0 7-8 7-6 0-6-3 2-2 1-5-3-6-11-6Q3 10 0 18z" fill="url(#edgeTop)" />
          <path d="M0 18Q3 9 13 9q9 1 10 8-10-3-12 6-1 8 9 13Q1 37 0 18z" fill="#1682d8" />
          <path d="M12 18q-4 9 5 13 9 3 16-2-6 8-14 7Q8 33 9 24q1-4 3-6z" fill="#0f559c" />
        </Svg>
      </Btn>
      <Btn label="Word" className="ml-2 w-[73px] border-b-[3px] border-[#76b9ed] bg-[#4f544f]">
        <Svg w={35} h={32} sw={0} className="mt-[3px]"><path d="M8 0h27v8H8z" fill="#41a5ee" /><path d="M8 8h27v8H8z" fill="#2b7cd3" /><path d="M8 16h27v8H8z" fill="#185abd" /><path d="M8 24h27v8H8z" fill="#103f91" /><rect y="7" width="18" height="18" rx="1" fill="#185abd" /><text x="2" y="21" fontSize="14" fontWeight="700" fill="#fff">W</text></Svg>
      </Btn>
      <div className="ml-auto flex w-[26px] flex-col items-center justify-between bg-[#f0f0f0] py-[10px] text-[#666]">
        <Btn label="Scroll up"><Svg w={14} h={10} sw={3}><path d="M1 9l6-7 6 7" /></Svg></Btn>
        <Btn label="Scroll down"><Svg w={14} h={10} sw={3}><path d="M1 1l6 7 6-7" /></Svg></Btn>
      </div>
      <button type="button" className="ml-10 flex w-[140px] items-center gap-4 text-xl">
        <Svg w={31} h={30} sw={0}><circle cx="14" cy="12" r="12" fill="#f8a824" /><path d="M8 29a7 7 0 0 1-1-13.500 9 9 0 0 1 16-1.500A7.500 7.500 0 0 1 24 29z" fill="#c5e4f8" /></Svg>
        <span className="pt-1">-5°C</span>
      </button>
      <Btn label="Show hidden icons" className="w-[18px] -ml-[21px]"><Svg w={18} h={11} sw={1.500}><path d="M1 10l8-8 8 8" /></Svg></Btn>
      <Btn label="Meet now" className="ml-[30px] w-[18px]"><Svg w={17} h={24} sw={1.400}><path d="M3 3q5-3 10 0M3 21q5 3 10 0M1 6h10v11H1zM11 10l5-3v9l-5-3" /></Svg></Btn>
      <Btn label="OneDrive" className="ml-[26px] w-6"><Svg w={25} h={18} sw={0}><path d="M5 17a5 5 0 0 1 0-9A8 8 0 0 1 19 7a5 5 0 0 1 2 10z" fill="#9a9a9a" /><path d="M4 17l12-9q8 0 8 5 0 4-4 4z" fill="#fff" /></Svg></Btn>
      <Btn label="Battery" className="ml-[25px] w-6"><Svg w={25} h={18} sw={1.500}><path d="M6 7h16v10H6z" fill="#fff" /><path d="M24 10v4M1 4h7v3q-1 3-3.500 3T1 7zM2.500 0v4M6.500 0v4M4.500 10v6H8" /></Svg></Btn>
      <Btn label="Network" className="ml-7 w-5"><Svg w={19} h={20} sw={1.500}><path d="M1 19A18 18 0 0 1 18 2M6 19A13 13 0 0 1 18 7M11 19a8 8 0 0 1 7-7" /><circle cx="16" cy="17" r="2" fill="#fff" stroke="none" /></Svg></Btn>
      <Btn label="Volume" className="ml-6 w-6"><Svg w={24} h={20} sw={1.400}><path d="M1 7h4l5-6v18l-5-6H1zM13 7q2 3 0 6M16 4q4 6 0 12M19 1q6 9 0 18" /></Svg></Btn>
      <Btn label="Windows Ink" className="ml-[31px] w-5"><Svg w={22} h={22} sw={1.500}><path d="M7 14L15 2q3-1 3 2l-8 12-4 2zM7 12q-6 0-6 5t6 4q5-2 4-10-1-4 1-7M14 13q6-4 7 0 0 3-5 2" /></Svg></Btn>
      <button type="button" className="ml-[29px] w-9 pt-px text-[17px]">ENG</button>
      <button type="button" className="ml-4 flex w-[100px] flex-col items-center justify-center text-[17px] leading-[29px]"><span>4:19 PM</span><span>2022-01-30</span></button>
      <Btn label="Notifications, 1 new" className="relative ml-6 w-[38px]">
        <Svg w={38} h={40} sw={1.800} className="mt-3"><path d="M1 1h23v18H14v5l-6-5H1z" fill="#fff" stroke="none" /><path d="M6 6h14M6 10h14M6 14h9" stroke="#3e201d" /><circle cx="24" cy="25" r="11" fill="#333" stroke="#999" /><text x="20" y="31" fontSize="15" fontWeight="600" fill="#fff" stroke="none">1</text></Svg>
      </Btn>
      <span className="ml-4 mr-[9px] w-px bg-[#8a7a78]" />
    </footer>
  );
}

export default function App() {
  return (
    <div className="flex h-screen w-full flex-col overflow-hidden bg-white font-['Open_Sans','Noto_Sans',sans-serif]">
      <div className="flex min-h-0 flex-1">
        <section aria-label="OneNote" className="flex w-[635px] shrink-0 flex-col overflow-hidden bg-[#f3f2f1]">
          <OneNoteHeader />
          <div className="flex min-h-0 flex-1 overflow-hidden border-t-2 border-[#d0cecc]">
            <SideRail />
            <OneNotePage />
          </div>
        </section>
        <section aria-label="Word" className="z-10 flex min-w-0 flex-1 flex-col border-x-2 border-b-[3px] border-[#2b579a] bg-[#e6e6e6] shadow-[0_0_6px_rgba(0,0,0,0.6)]">
          <WordHeader />
          <Ribbon />
          <main className="flex min-h-0 flex-1 overflow-hidden pl-[130px] pr-[157px] pt-[21px]">
            <div className="flex-1 border border-b-0 border-[#c6c6c6] bg-white pt-[116px] text-center font-['Lato','Open_Sans',sans-serif] text-[17px] leading-6 text-black">
              New Research links racism to higher preterm birth Rates in Black Women
            </div>
          </main>
          <StatusBar />
        </section>
      </div>
      <Taskbar />
    </div>
  );
}
